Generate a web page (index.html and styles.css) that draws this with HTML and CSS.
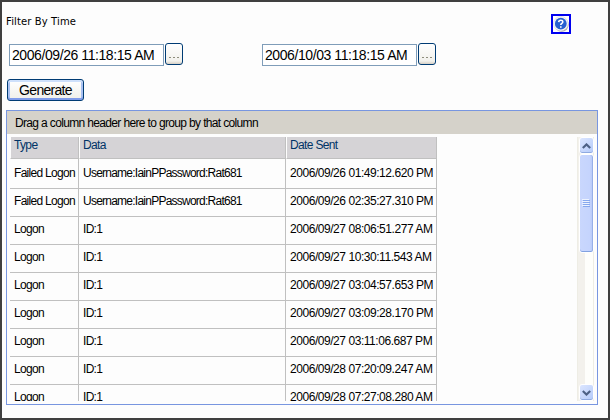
FILE: index.html
```html
<!DOCTYPE html>
<html lang="en">
<head>
<meta charset="utf-8">
<title>Filter By Time</title>
<link rel="stylesheet" href="styles.css">
</head>
<body>
<main class="window">
  <header class="top">
    <span class="title">Filter By Time</span>
    <a class="help">
      <svg width="16" height="16" viewBox="0 0 16 16">
        <circle cx="8.7" cy="8.8" r="7" fill="#a3a3ad"/>
        <circle cx="7.8" cy="7.7" r="7.3" fill="#f7f7fa" stroke="#d0d0d8" stroke-width=".5"/>
        <circle cx="7.8" cy="7.7" r="5.9" fill="#2860d0"/>
        <path d="M5.7 6.1C5.8 3.5 9.9 3.6 9.8 6C9.7 7.5 7.8 7.4 7.8 9.1M7.8 10.3V11.8" fill="none" stroke="#fff" stroke-width="1.6"/>
      </svg>
    </a>
  </header>
  <section class="dates">
    <div class="picker"><div class="field"><span>2006/09/26 11:18:15 AM</span></div><button class="more"><i></i><i></i><i></i></button></div>
    <div class="picker"><div class="field"><span>2006/10/03 11:18:15 AM</span></div><button class="more"><i></i><i></i><i></i></button></div>
  </section>
  <button class="generate">Generate</button>
  <section class="panel">
    <div class="groupbar">Drag a column header here to group by that column</div>
    <div class="body">
      <div class="table">
        <div class="row head"><span>Type</span><span>Data</span><span>Date Sent</span></div>
        <div class="row"><span>Failed Logon</span><span class="user">Username:IainPPassword:Rat681</span><span class="date">2006/09/26 01:49:12.620 PM</span></div>
        <div class="row"><span>Failed Logon</span><span class="user">Username:IainPPassword:Rat681</span><span class="date">2006/09/26 02:35:27.310 PM</span></div>
        <div class="row"><span>Logon</span><span>ID:1</span><span class="date">2006/09/27 08:06:51.277 AM</span></div>
        <div class="row"><span>Logon</span><span>ID:1</span><span class="date">2006/09/27 10:30:11.543 AM</span></div>
        <div class="row"><span>Logon</span><span>ID:1</span><span class="date">2006/09/27 03:04:57.653 PM</span></div>
        <div class="row"><span>Logon</span><span>ID:1</span><span class="date">2006/09/27 03:09:28.170 PM</span></div>
        <div class="row"><span>Logon</span><span>ID:1</span><span class="date">2006/09/27 03:11:06.687 PM</span></div>
        <div class="row"><span>Logon</span><span>ID:1</span><span class="date">2006/09/28 07:20:09.247 AM</span></div>
        <div class="row"><span>Logon</span><span>ID:1</span><span class="date">2006/09/28 07:27:08.280 AM</span></div>
      </div>
      <div class="scroll">
        <div class="arrow"><svg width="9" height="6" viewBox="0 0 9 6"><path d="M.8 5L4.5 1.4L8.2 5" fill="none" stroke="#4d6185" stroke-width="2.1"/></svg></div>
        <div class="thumb"><i></i><i></i><i></i><i></i></div>
        <div class="arrow down"><svg width="9" height="6" viewBox="0 0 9 6"><path d="M.8 1L4.5 4.6L8.2 1" fill="none" stroke="#4d6185" stroke-width="2.1"/></svg></div>
      </div>
    </div>
  </section>
</main>
</body>
</html>
```
FILE: styles.css
```css
* { box-sizing: border-box; }
body { margin: 0; font-family: "Liberation Sans", Arial, sans-serif; color: #000; }
button { padding: 0; font-family: inherit; color: #000; }
.window {
  width: 610px; height: 420px; overflow: hidden;
  border: 2px solid #404040; background: #fdfdfd;
  padding: 12px 10px 0 4px;
}
.top { display: flex; justify-content: space-between; height: 29px; padding-right: 27px; }
.title { font: 10px/15px "DejaVu Sans", Verdana, sans-serif; letter-spacing: .12px; white-space: nowrap; }
.help { width: 20px; height: 20px; border: 2px solid #0000f0; background: #fff; }
.help svg { display: block; }
.dates { display: flex; gap: 79px; padding-left: 3px; height: 36px; }
.picker { display: flex; gap: 1px; width: 174px; }
.field {
  width: 155px; height: 22px; margin-top: 1px; padding-left: 2px;
  border: 1px solid #7f9db9; background: #fff;
  font-size: 14px; line-height: 21px; letter-spacing: -.42px; white-space: nowrap;
}
.more {
  display: flex; justify-content: center; align-items: flex-end; gap: 2px;
  width: 18px; height: 22px; padding-bottom: 6px;
  border: 1px solid #003c74; border-radius: 3px;
  background: linear-gradient(#fff, #f2f1ec 85%, #d6d0c5);
}
.more i { width: 2px; height: 1px; background: #8d8d7c; }
.generate {
  display: block; width: 77px; height: 22px; margin-left: 1px;
  border: 1px solid #003c74; border-radius: 3px;
  background: linear-gradient(#fff, #f0efe9);
  box-shadow: inset 0 2px #cee0fb, inset 0 -2px #7f9bea, inset 2px 0 #a9c1f2, inset -2px 0 #a9c1f2;
  font-size: 14px; line-height: 19px; letter-spacing: -.7px;
}
.panel { width: 592px; height: 295px; margin-top: 9px; border: 1px solid #7896e0; background: #fdfdfd; }
.groupbar {
  height: 23px; padding-left: 8px; background: #d5d2ca;
  font-size: 12px; line-height: 25px; letter-spacing: -.67px; word-spacing: .1px; white-space: nowrap;
}
.body { display: flex; justify-content: space-between; height: 264px; margin: 3px 3px 0; overflow: hidden; }
.table { width: 427px; font-size: 12px; letter-spacing: -.7px; white-space: nowrap; }
.row { display: grid; grid-template-columns: 69px 207px 151px; height: 28px; line-height: 29px; }
.row span { padding-left: 4px; border-right: 1px solid #c0c0c0; border-bottom: 1px solid #c0c0c0; }
.head { height: 22px; line-height: 16px; color: #003366; letter-spacing: -.65px; }
.head span { background: #d5d3d6; border-left: 1px solid #fdfdfd; padding-left: 3px; }
.row .date { letter-spacing: -.45px; }
.row .user { letter-spacing: -.76px; }
.scroll {
  display: flex; flex-direction: column; width: 17px; padding: 0 1px;
  border-left: 1px solid #eeede5; border-right: 1px solid #eeede5;
  background: linear-gradient(90deg, #f3f1ec 7px, #fefefb 7px);
}
.arrow {
  display: flex; align-items: center; justify-content: center;
  width: 15px; height: 17px; flex: none; border: 1px solid #fff; border-radius: 3px;
  background: linear-gradient(135deg, #dce6ff, #b5cbfa);
  box-shadow: inset 0 -1px #8faae0;
}
.down { margin-top: auto; }
.thumb {
  display: flex; flex-direction: column; align-items: center; justify-content: center; gap: 1px;
  width: 15px; height: 99px; flex: none; border: 1px solid #fff; border-radius: 3px;
  background: linear-gradient(90deg, #c9d7fd, #c5d4fd 75%, #b5c8f6);
  box-shadow: inset 0 -1px #82a2e0, inset -1px 0 #98b0e8;
}
.thumb i { width: 7px; height: 1px; background: #86a8ee; box-shadow: -1px -1px #edf3ff; }
```
